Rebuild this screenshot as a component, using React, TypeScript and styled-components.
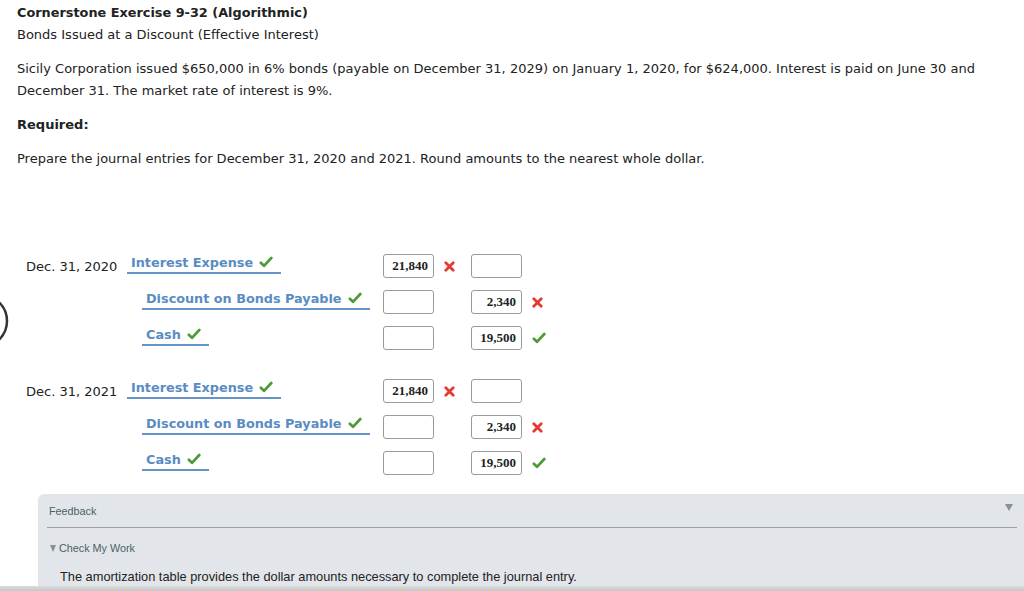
import React from "react";
import styled, { createGlobalStyle } from "styled-components";

const Global = createGlobalStyle`
  html, body { margin: 0; padding: 0; background: #fff; }
  body { font-family: "DejaVu Sans", Verdana, sans-serif; color: #222; overflow: hidden; }
`;

const Page = styled.div`
  position: relative;
  width: 1024px;
  height: 591px;
  overflow: hidden;
`;

const Intro = styled.div`
  padding: 2px 0 0 17px;
  font-size: 13px;
  line-height: 22px;
`;

const Title = styled.div`
  font-weight: bold;
  font-size: 12.85px;
`;

const Para = styled.p<{ $bold?: boolean }>`
  margin: 12px 0 0;
  max-width: 975px;
  font-weight: ${(p) => (p.$bold ? "bold" : "normal")};
`;

const Journal = styled.div`
  margin-top: 78px;
  padding-left: 26px;
  display: flex;
  flex-direction: column;
  gap: 17px;
`;

const Entry = styled.div`
  display: flex;
  flex-direction: column;
`;

const Row = styled.div`
  display: grid;
  grid-template-columns: 101px 256px 51px 37px 51px 30px;
  height: 36px;
  align-items: center;
`;

const DateCell = styled.div`
  font-size: 13px;
  color: #222;
  padding-top: 1px;
`;

const AccountCell = styled.div<{ $indent?: boolean }>`
  padding-left: ${(p) => (p.$indent ? 15 : 0)}px;
  align-self: start;
  padding-top: 5px;
  display: flex;
`;

const Account = styled.div`
  display: flex;
  align-items: center;
  gap: 6px;
  padding: 0 8px 1px 4px;
  height: 18px;
  border-bottom: 2px solid #6595c8;
  color: #5a8cc3;
  font-weight: bold;
  font-size: 12.8px;
`;

const AmountBox = styled.div`
  box-sizing: border-box;
  width: 51px;
  height: 24px;
  border: 1px solid #9a9a9a;
  border-radius: 3px;
  background: #fff;
  font-family: "Liberation Serif", "Times New Roman", serif;
  font-weight: bold;
  font-size: 13px;
  color: #222;
  text-align: right;
  padding-right: 5px;
  line-height: 22px;
`;

const MarkCell = styled.div`
  display: flex;
  align-items: center;
  padding-left: 10px;
  height: 24px;
`;

const Check = ({ size = 14 }: { size?: number }) => (
  <svg width={size} height={size} viewBox="0 0 14 14">
    <path d="M1.8 7.8 L5 10.8 L12.3 3" fill="none" stroke="#4c9a3a" strokeWidth="2.7" strokeLinecap="round" strokeLinejoin="round" />
  </svg>
);

const Cross = () => (
  <svg width="11" height="11" viewBox="0 0 11 11">
    <path d="M1.8 1.8 L9.2 9.2 M9.2 1.8 L1.8 9.2" fill="none" stroke="#e53a33" strokeWidth="2.8" strokeLinecap="round" />
  </svg>
);

const Panel = styled.div`
  margin: 13px 0 0 38px;
  background: #e2e6ea;
  border-top-left-radius: 6px;
  height: 120px;
  font-family: "Liberation Sans", Arial, sans-serif;
`;

const PanelHead = styled.div`
  margin: 0 7px 0 9px;
  height: 33px;
  border-bottom: 1px solid #9a9fa3;
  display: flex;
  align-items: center;
  font-size: 10.8px;
  color: #4c5f68;
  padding: 0 0 0 2px;
`;

const HeadArrow = styled.span`
  margin-left: auto;
  margin-right: 4px;
  margin-top: -6px;
  width: 0;
  height: 0;
  border-left: 4px solid transparent;
  border-right: 4px solid transparent;
  border-top: 7px solid #8a8f93;
`;

const Toggle = styled.div`
  display: flex;
  align-items: center;
  gap: 3px;
  margin: 14px 0 0 12px;
  font-size: 10.8px;
  color: #4c5f68;
`;

const SmallArrow = styled.span`
  width: 0;
  height: 0;
  border-left: 3px solid transparent;
  border-right: 3px solid transparent;
  border-top: 7px solid #8a8f93;
`;

const FeedbackText = styled.div`
  margin: 15px 0 0 22px;
  font-size: 12.8px;
  color: #222;
`;

const BottomBar = styled.div`
  position: absolute;
  left: 0;
  right: 0;
  bottom: 0;
  height: 5px;
  background: linear-gradient(#dcdcdc, #c6c6c6);
`;

const EdgeCircle = styled.svg`
  position: absolute;
  left: 0;
  top: 290px;
`;

type Line = { account: string; debit?: string; credit?: string; debitMark?: "x" | "ok"; creditMark?: "x" | "ok"; indent?: boolean };

const lines: Line[] = [
  { account: "Interest Expense", debit: "21,840", debitMark: "x" },
  { account: "Discount on Bonds Payable", credit: "2,340", creditMark: "x", indent: true },
  { account: "Cash", credit: "19,500", creditMark: "ok", indent: true },
];

const entries = ["Dec. 31, 2020", "Dec. 31, 2021"];

const Mark = ({ m }: { m?: "x" | "ok" }) => (m === "x" ? <Cross /> : m === "ok" ? <Check /> : null);

export default function App() {
  return (
    <Page>
      <Global />
      <Intro>
        <Title>Cornerstone Exercise 9-32 (Algorithmic)</Title>
        <div>Bonds Issued at a Discount (Effective Interest)</div>
        <Para>
          Sicily Corporation issued $650,000 in 6% bonds (payable on December 31, 2029) on January 1, 2020, for $624,000. Interest is paid on June 30 and December 31. The market rate of interest is 9%.
        </Para>
        <Para $bold>Required:</Para>
        <Para>Prepare the journal entries for December 31, 2020 and 2021. Round amounts to the nearest whole dollar.</Para>
      </Intro>
      <Journal>
        {entries.map((d) => (
          <Entry key={d}>
            {lines.map((l, i) => (
              <Row key={l.account}>
                <DateCell>{i === 0 ? d : ""}</DateCell>
                <AccountCell $indent={l.indent}>
                  <Account>
                    {l.account}
                    <Check />
                  </Account>
                </AccountCell>
                <AmountBox>{l.debit ?? ""}</AmountBox>
                <MarkCell><Mark m={l.debitMark} /></MarkCell>
                <AmountBox>{l.credit ?? ""}</AmountBox>
                <MarkCell><Mark m={l.creditMark} /></MarkCell>
              </Row>
            ))}
          </Entry>
        ))}
      </Journal>
      <Panel>
        <PanelHead>
          Feedback
          <HeadArrow />
        </PanelHead>
        <Toggle>
          <SmallArrow />
          Check My Work
        </Toggle>
        <FeedbackText>The amortization table provides the dollar amounts necessary to complete the journal entry.</FeedbackText>
      </Panel>
      <EdgeCircle width="10" height="60" viewBox="0 0 10 60">
        <circle cx="-19" cy="31" r="26" fill="none" stroke="#333" strokeWidth="2.5" />
      </EdgeCircle>
      <BottomBar />
    </Page>
  );
}
